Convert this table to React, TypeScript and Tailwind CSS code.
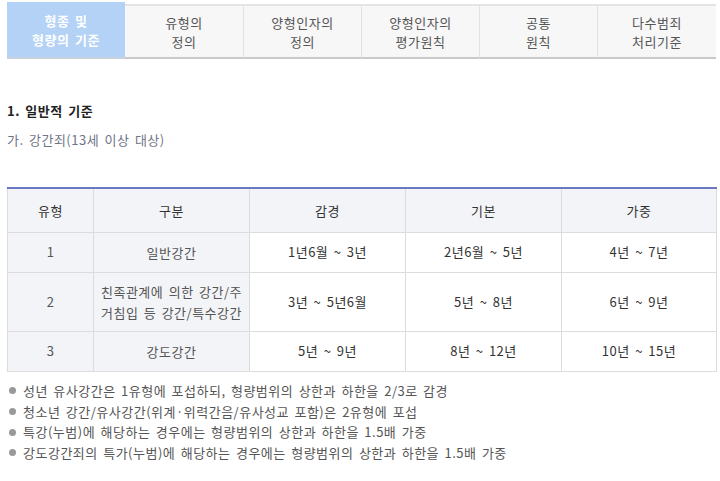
import React from "react";

const tabs = [
  ["형종 및", "형량의 기준"],
  ["유형의", "정의"],
  ["양형인자의", "정의"],
  ["양형인자의", "평가원칙"],
  ["공통", "원칙"],
  ["다수범죄", "처리기준"],
];

const rows = [
  { t: "1", g: ["일반강간"], a: "1년6월 ~ 3년", b: "2년6월 ~ 5년", c: "4년 ~ 7년", h: "h-[40px]" },
  { t: "2", g: ["친족관계에 의한 강간/주", "거침입 등 강간/특수강간"], a: "3년 ~ 5년6월", b: "5년 ~ 8년", c: "6년 ~ 9년", h: "h-[59px]" },
  { t: "3", g: ["강도강간"], a: "5년 ~ 9년", b: "8년 ~ 12년", c: "10년 ~ 15년", h: "h-[40px]" },
];

const notes = [
  "성년 유사강간은 1유형에 포섭하되, 형량범위의 상한과 하한을 2/3로 감경",
  "청소년 강간/유사강간(위계·위력간음/유사성교 포함)은 2유형에 포섭",
  "특강(누범)에 해당하는 경우에는 형량범위의 상한과 하한을 1.5배 가중",
  "강도강간죄의 특가(누범)에 해당하는 경우에는 형량범위의 상한과 하한을 1.5배 가중",
];

export default function App() {
  return (
    <div
      className="w-[720px] h-[481px] bg-white overflow-hidden text-[13px] text-[#444] tracking-[0.5px] [word-spacing:2px]"
      style={{ fontFamily: '"Noto Sans CJK KR", "Noto Sans", sans-serif' }}
    >
      <div className="pl-[7px] pr-[4px] pt-[2px]">
        <div className="flex items-end">
          {tabs.map((t, i) =>
            i === 0 ? (
              <div
                key={i}
                className="w-[118px] h-[57px] bg-[#b3d2f6] border-b-2 border-[#c8d3df] flex flex-col items-center justify-center text-white font-bold leading-[19px]"
              >
                <span>{t[0]}</span>
                <span>{t[1]}</span>
              </div>
            ) : (
              <div
                key={i}
                className={`${i === 5 ? "w-[119px]" : "w-[118px]"} h-[55px] bg-[#f7f7f7] border-t-2 border-t-[#e4e4e4] border-b-2 border-b-[#c9c9c9] ${i > 1 ? "border-l border-l-[#e2e2e2]" : ""} flex flex-col items-center justify-center text-[#555] leading-[19px]`}
              >
                <span>{t[0]}</span>
                <span>{t[1]}</span>
              </div>
            )
          )}
        </div>
      </div>

      <div className="pl-[7px] pt-[42px]">
        <div className="font-bold text-[#222] leading-[20px]">1. 일반적 기준</div>
        <div className="mt-[9px] text-[#707488] leading-[20px]">가. 강간죄(13세 이상 대상)</div>
      </div>

      <div className="pl-[7px] pr-[4px] pt-[37px]">
        <table className="w-[709px] border-collapse border-t-2 border-t-[#6b79c2] text-center table-fixed">
          <colgroup>
            <col className="w-[86px]" />
            <col className="w-[156px]" />
            <col className="w-[156px]" />
            <col className="w-[156px]" />
            <col className="w-[155px]" />
          </colgroup>
          <thead>
            <tr className="h-[44px] bg-[#f3f4f8] text-[#333]">
              {["유형", "구분", "감경", "기본", "가중"].map((h) => (
                <th key={h} className="border border-[#dcdcdc] border-t-0 font-normal">
                  {h}
                </th>
              ))}
            </tr>
          </thead>
          <tbody>
            {rows.map((r) => (
              <tr key={r.t} className={r.h}>
                <td className="border border-[#dcdcdc] bg-[#f3f4f8] text-[#555]">{r.t}</td>
                <td className="border border-[#dcdcdc] bg-[#f3f4f8] text-[#555] leading-[21px]">
                  {r.g.map((g) => (
                    <div key={g}>{g}</div>
                  ))}
                </td>
                <td className="border border-[#dcdcdc] text-[#333]">{r.a}</td>
                <td className="border border-[#dcdcdc] text-[#333]">{r.b}</td>
                <td className="border border-[#dcdcdc] text-[#333]">{r.c}</td>
              </tr>
            ))}
          </tbody>
        </table>
      </div>

      <ul className="pl-[9px] pt-[9px] text-[#555]">
        {notes.map((n) => (
          <li key={n} className="flex items-center h-[20.7px] leading-[20px]">
            <span className="w-[7px] h-[7px] rounded-full bg-[#999] mr-[7px] shrink-0" />
            <span>{n}</span>
          </li>
        ))}
      </ul>
    </div>
  );
}
